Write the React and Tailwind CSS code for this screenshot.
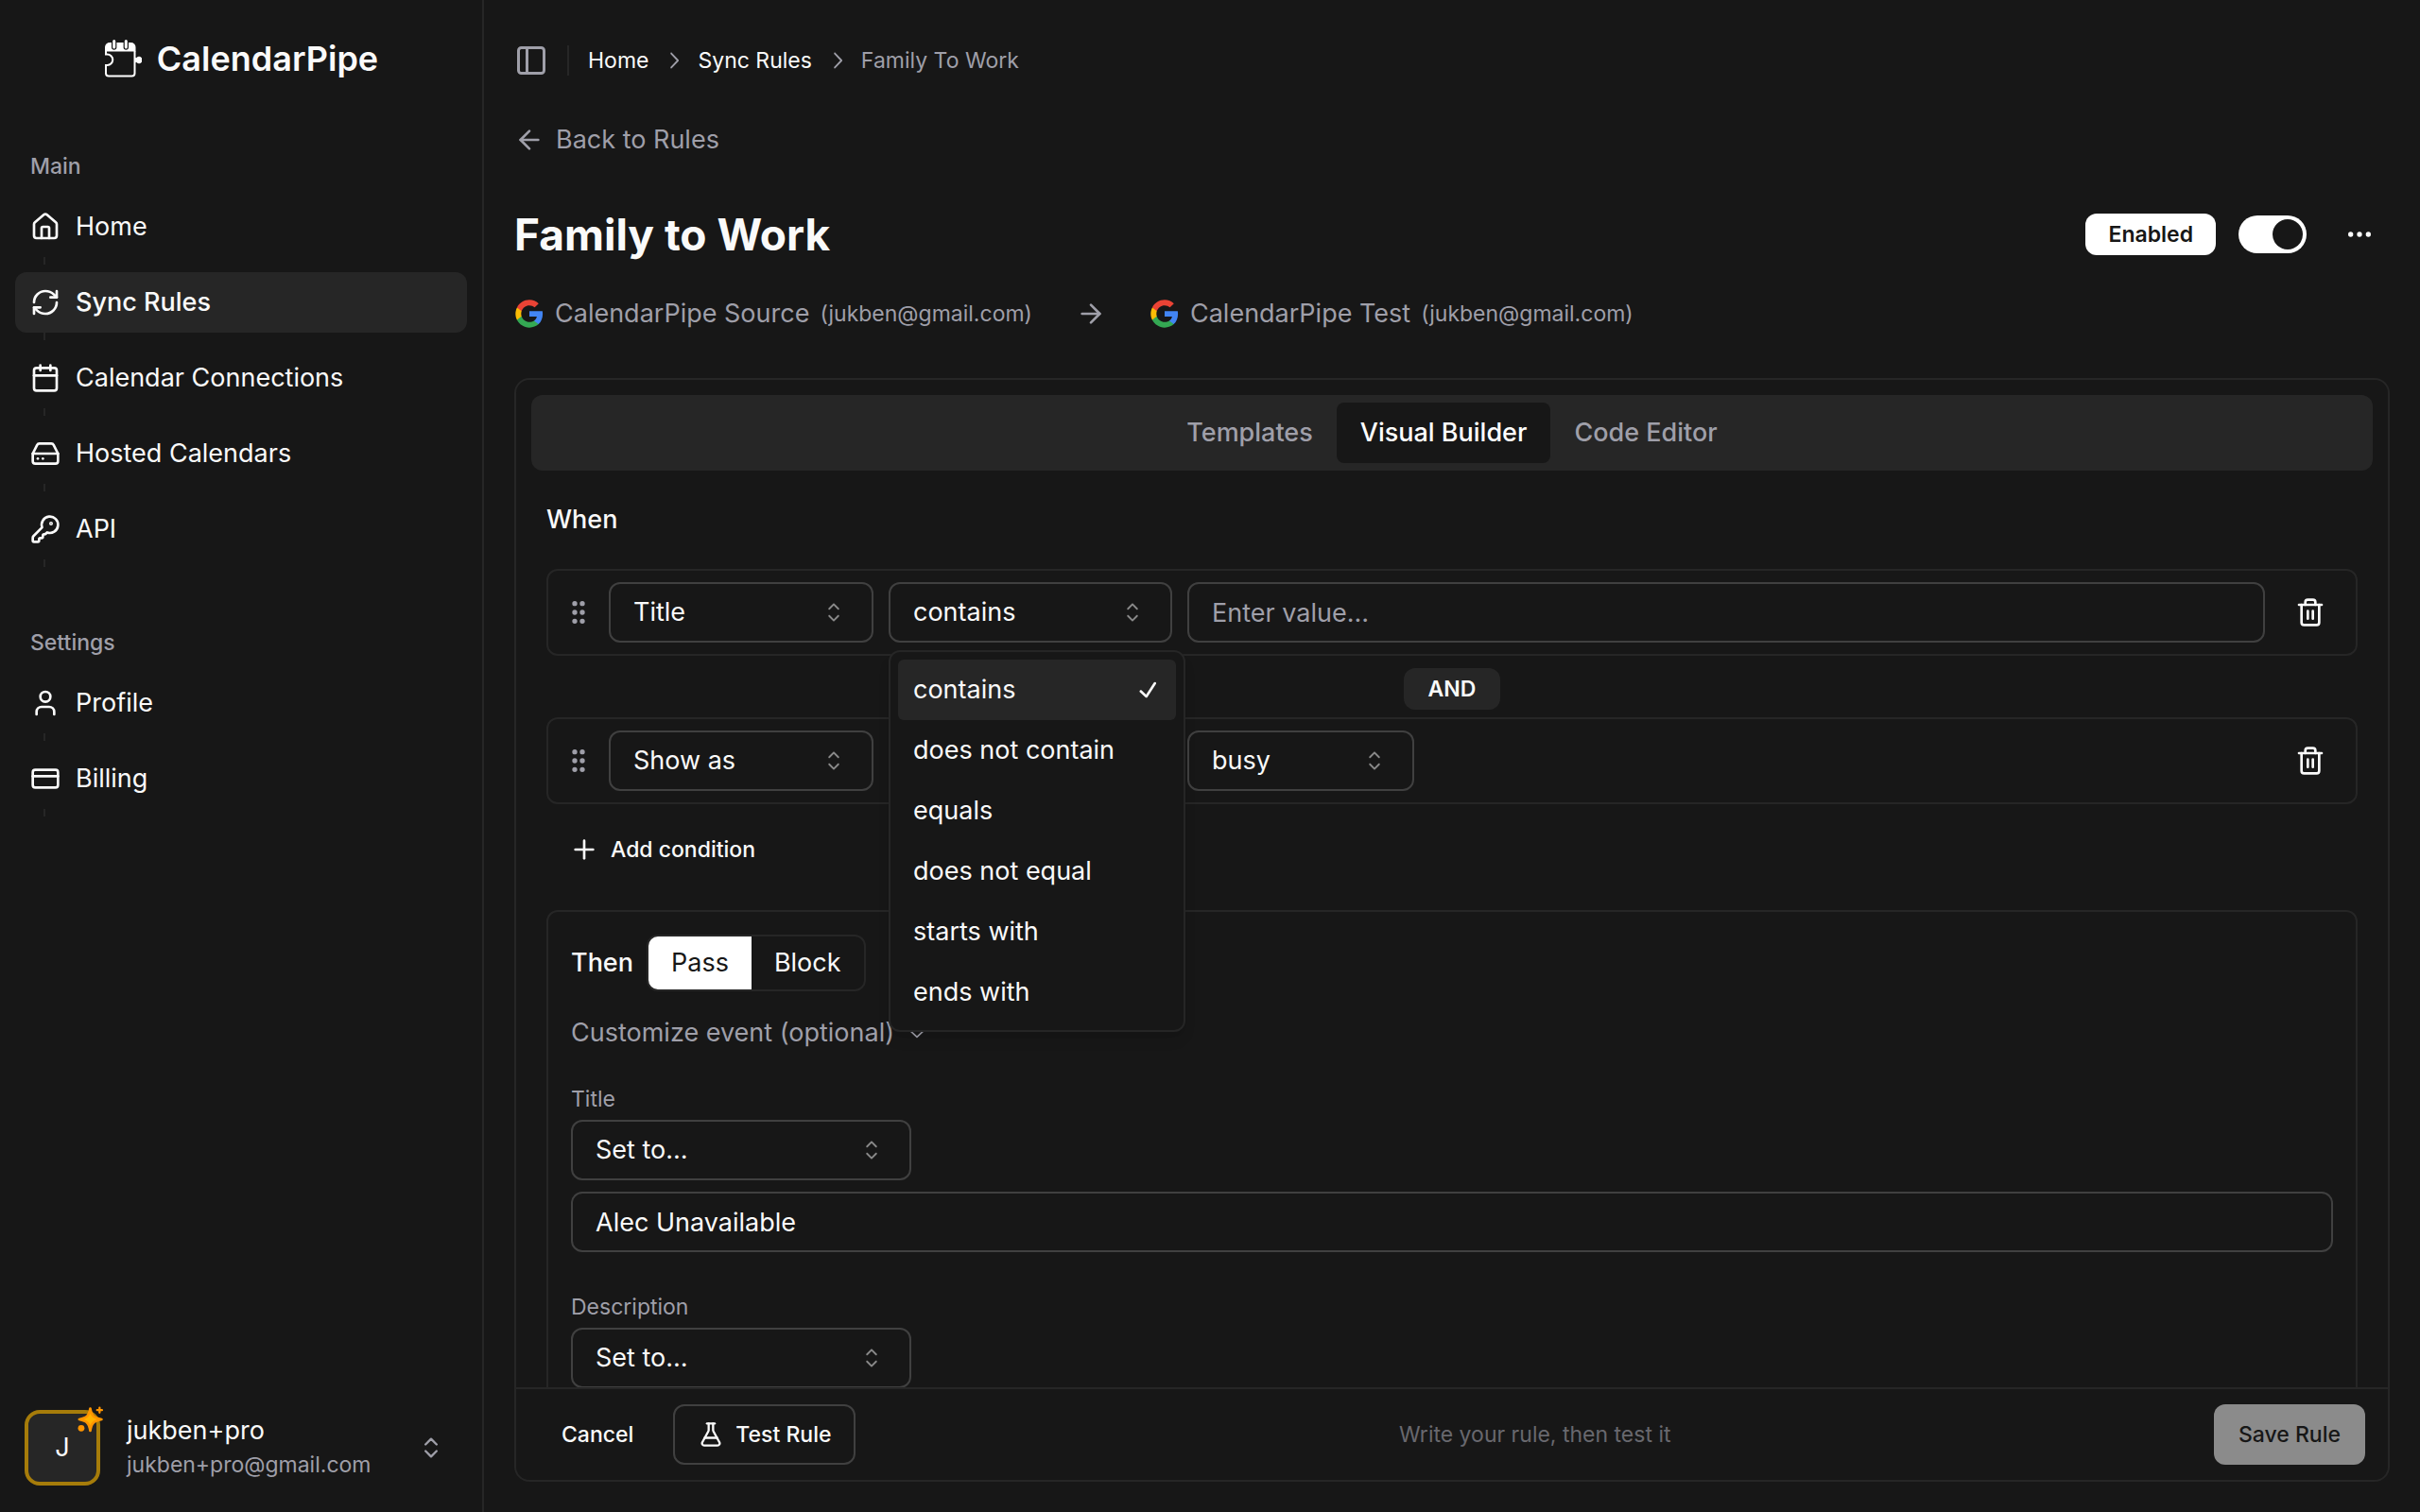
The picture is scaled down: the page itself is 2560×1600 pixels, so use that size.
import React from "react";
import {
  House,
  RefreshCw,
  Calendar,
  HardDrive,
  KeyRound,
  User,
  CreditCard,
  PanelLeft,
  ArrowLeft,
  ArrowRight,
  Ellipsis,
  GripVertical,
  Trash2,
  Plus,
  FlaskConical,
  ChevronsUpDown,
} from "lucide-react";
import { RxCaretSort, RxCheck, RxChevronRight, RxChevronDown } from "react-icons/rx";

function LogoMark() {
  return (
    <svg viewBox="0 0 40 40" className="h-10 w-10 shrink-0" aria-hidden="true">
      <path d="M1 12.5V8A5 5 0 0 1 6 3H28.5A5 5 0 0 1 33.5 8V12.5Z" fill="#fff" />
      <path
        d="M2 12V15.5H3.5A5.700 5.700 0 0 1 3.5 27H2V35.500A3 3 0 0 0 5 38.500H29.500A3 3 0 0 0 32.500 35.500V12"
        fill="none"
        stroke="#fff"
        strokeWidth="2"
      />
      <path d="M33 19H34.500A3.600 3.600 0 1 1 34.500 24H33Z" fill="#fff" />
      <path d="M10.700 2.500V8M23.300 2.500V8" stroke="#171717" strokeWidth="5.400" strokeLinecap="round" />
      <path d="M10.700 1.500V8M23.300 1.500V8" stroke="#fff" strokeWidth="3" strokeLinecap="round" />
    </svg>
  );
}

function GoogleMark() {
  return (
    <svg viewBox="0 0 24 24" className="size-8 shrink-0" aria-hidden="true">
      <path
        fill="#4285F4"
        d="M22.56 12.25c0-.78-.07-1.53-.2-2.25H12v4.26h5.92c-.26 1.37-1.04 2.53-2.21 3.310v2.770h3.570c2.080-1.920 3.280-4.740 3.280-8.090z"
      />
      <path
        fill="#34A853"
        d="M12 23c2.970 0 5.460-.98 7.280-2.660l-3.570-2.770c-.98.66-2.230 1.060-3.710 1.060-2.860 0-5.290-1.930-6.160-4.530H2.180v2.840C3.990 20.530 7.700 23 12 23z"
      />
      <path
        fill="#FBBC05"
        d="M5.840 14.090c-.22-.66-.35-1.360-.35-2.090s.13-1.430.35-2.090V7.070H2.180C1.430 8.550 1 10.220 1 12s.43 3.450 1.180 4.930l2.850-2.220.81-.62z"
      />
      <path
        fill="#EA4335"
        d="M12 5.380c1.620 0 3.060.56 4.210 1.640l3.150-3.150C17.450 2.090 14.970 1 12 1 7.700 1 3.990 3.470 2.180 7.070l3.660 2.840c.87-2.600 3.300-4.530 6.160-4.530z"
      />
    </svg>
  );
}

function Sparkles() {
  const star = "M13 2.500C14.200 9.500 16 11.800 24.500 13.500C16 15.200 14.200 17.500 13 25C11.800 17.500 10 15.200 1.800 13.500C10 11.800 11.800 9.500 13 2.500Z";
  return (
    <svg viewBox="0 0 27 27" className="absolute -top-2 -right-2 size-7" aria-hidden="true">
      <path d={star} fill="#ffb300" stroke="#ff9500" strokeWidth="2.600" strokeLinejoin="round" />
      <path d="M22.500 1.500V6.500M20 4H25" stroke="#ff9500" strokeWidth="2.200" strokeLinecap="round" />
      <circle cx="3.800" cy="22.500" r="3.300" fill="#ff9500" />
    </svg>
  );
}

function NavGroup({ label, items }) {
  return (
    <section className="px-4">
      <h2 className="flex h-16 items-center px-4 text-[23px] font-medium text-[#9f9fa9]">{label}</h2>
      <ul>
        {items.map(({ name, Icon, active }) => (
          <li key={name}>
            <a
              href="#"
              aria-current={active ? "page" : undefined}
              className={
                active
                  ? "flex h-16 items-center gap-4 rounded-xl bg-[#262626] px-4 font-medium"
                  : "flex h-16 items-center gap-4 rounded-xl px-4"
              }
            >
              <Icon className="size-8 shrink-0" />
              {name}
            </a>
            <div className="mb-2 ml-[30px] h-2 w-0.5 bg-[#262626]" />
          </li>
        ))}
      </ul>
    </section>
  );
}

function Select({ id, label, value, className }) {
  return (
    <div className={"relative shrink-0 " + className}>
      <select
        id={id}
        aria-label={label}
        defaultValue={value}
        className="h-16 w-full appearance-none rounded-xl border-2 border-[#404040] bg-transparent px-6"
      >
        <option>{value}</option>
      </select>
      <RxCaretSort className="pointer-events-none absolute top-4 right-[26px] size-8 opacity-50" />
    </div>
  );
}

const operators = ["contains", "does not contain", "equals", "does not equal", "starts with", "ends with"];

function OperatorMenu() {
  return (
    <div className="relative w-[300px] shrink-0">
      <button
        type="button"
        role="combobox"
        aria-label="Operator"
        aria-expanded="true"
        aria-controls="operators"
        className="flex h-16 w-full items-center justify-between rounded-xl border-2 border-[#404040] px-6"
      >
        contains
        <RxCaretSort className="size-8 opacity-50" />
      </button>
      <ul
        id="operators"
        role="listbox"
        className="absolute top-[72px] left-0 z-10 w-[314px] rounded-xl border-2 border-[#262626] bg-[#171717] p-2 shadow-lg"
      >
        {operators.map((name, i) => (
          <li
            key={name}
            role="option"
            aria-selected={i === 0}
            className={
              i === 0
                ? "flex h-16 items-center justify-between rounded-md bg-[#262626] pr-[14px] pl-4"
                : "flex h-16 items-center pl-4"
            }
          >
            {name}
            {i === 0 && <RxCheck className="size-8" />}
          </li>
        ))}
      </ul>
    </div>
  );
}

function Condition({ children }) {
  return (
    <div className="flex items-center gap-4 rounded-xl border-2 border-[#262626] px-4 py-3">
      <GripVertical className="size-8 shrink-0 text-[#9f9fa9]" />
      {children}
      <button type="button" aria-label="Delete condition" className="ml-auto flex size-16 shrink-0 items-center justify-center">
        <Trash2 className="size-8" />
      </button>
    </div>
  );
}

function Endpoint({ name, email }) {
  return (
    <div className="flex items-center gap-[11px]">
      <GoogleMark />
      <span>{name}</span>
      <span className="text-[23px]">({email})</span>
    </div>
  );
}

function Sidebar() {
  return (
    <aside className="flex w-[512px] shrink-0 flex-col border-r-2 border-[#262626]">
      <a href="#" className="flex h-[124px] items-center justify-center gap-4 text-[36px] font-semibold">
        <LogoMark />
        CalendarPipe
      </a>
      <nav className="flex flex-1 flex-col gap-10 pt-5">
        <NavGroup
          label="Main"
          items={[
            { name: "Home", Icon: House },
            { name: "Sync Rules", Icon: RefreshCw, active: true },
            { name: "Calendar Connections", Icon: Calendar },
            { name: "Hosted Calendars", Icon: HardDrive },
            { name: "API", Icon: KeyRound },
          ]}
        />
        <NavGroup
          label="Settings"
          items={[
            { name: "Profile", Icon: User },
            { name: "Billing", Icon: CreditCard },
          ]}
        />
      </nav>
      <button type="button" className="mb-7 flex items-center px-[26px] text-left">
        <span className="relative flex size-20 shrink-0 items-center justify-center rounded-2xl border-4 border-[#a67c0a] bg-[#262626]">
          J
          <Sparkles />
        </span>
        <span className="ml-7 flex flex-1 flex-col">
          <span className="leading-9">jukben+pro</span>
          <span className="text-[23px] leading-9 text-[#9f9fa9]">jukben+pro@gmail.com</span>
        </span>
        <ChevronsUpDown className="mr-[14px] size-7 text-[#9f9fa9]" />
      </button>
    </aside>
  );
}

function RuleHeader() {
  return (
    <header>
      <div className="flex h-32 items-center">
        <button type="button" aria-label="Toggle sidebar" className="text-[#9f9fa9]">
          <PanelLeft className="size-9" />
        </button>
        <div className="mr-5 ml-5 h-8 w-0.5 bg-[#262626]" />
        <nav aria-label="Breadcrumb" className="flex items-center gap-3 text-[23px]">
          <a href="#">Home</a>
          <RxChevronRight className="size-7 text-[#9f9fa9]" />
          <a href="#">Sync Rules</a>
          <RxChevronRight className="size-7 text-[#9f9fa9]" />
          <span className="text-[#9f9fa9]">Family To Work</span>
        </nav>
      </div>
      <a href="#" className="flex h-10 w-fit items-center gap-3 text-[#9f9fa9]">
        <ArrowLeft className="size-8" />
        Back to Rules
      </a>
      <div className="mt-12 flex h-16 items-center">
        <h1 className="flex-1 text-[46px] font-bold">Family to Work</h1>
        <span className="flex h-11 items-center rounded-xl bg-white px-6 text-[23px] font-semibold text-[#171717]">
          Enabled
        </span>
        <input
          type="checkbox"
          role="switch"
          aria-label="Rule enabled"
          defaultChecked
          className="ml-6 h-10 w-[72px] appearance-none rounded-full bg-white p-1 before:ml-auto before:block before:size-8 before:rounded-full before:bg-[#171717]"
        />
        <button type="button" aria-label="More actions" className="ml-6 flex size-16 items-center justify-center">
          <Ellipsis className="size-8" />
        </button>
      </div>
      <div className="mt-8 flex h-10 items-center gap-[46px] text-[#9f9fa9]">
        <Endpoint name="CalendarPipe Source" email="jukben@gmail.com" />
        <ArrowRight className="size-8" />
        <Endpoint name="CalendarPipe Test" email="jukben@gmail.com" />
      </div>
    </header>
  );
}

function RuleForm() {
  return (
    <form className="mt-12 flex min-h-0 flex-1 flex-col rounded-2xl border-2 border-[#262626]">
      <div className="flex min-h-0 flex-1 flex-col overflow-hidden px-4 pt-4">
        <div role="tablist" className="flex h-20 shrink-0 items-center justify-center rounded-xl bg-[#262626] font-medium text-[#9f9fa9]">
          <button type="button" role="tab" aria-selected="false" className="h-16 px-[25px]">
            Templates
          </button>
          <button type="button" role="tab" aria-selected="true" className="h-16 rounded-lg bg-[#171717] px-[25px] text-white">
            Visual Builder
          </button>
          <button type="button" role="tab" aria-selected="false" className="h-16 px-[25px]">
            Code Editor
          </button>
        </div>

        <div className="min-h-0 flex-1 px-4 pt-8">
          <h2 className="mb-8 h-10 font-medium">When</h2>
          <Condition>
            <Select label="Field" value="Title" className="w-[280px]" />
            <OperatorMenu />
            <input
              aria-label="Value"
              placeholder="Enter value…"
              className="h-16 min-w-0 flex-1 rounded-xl border-2 border-[#404040] bg-transparent px-6 placeholder:text-[#9f9fa9]"
            />
          </Condition>
          <div className="flex justify-center pt-[13px] pb-2">
            <span className="flex h-11 items-center rounded-xl bg-[#262626] px-[26px] text-[23px] font-semibold">AND</span>
          </div>
          <Condition>
            <Select label="Field" value="Show as" className="w-[280px]" />
            <Select label="Operator" value="equals" className="w-[300px]" />
            <Select label="Value" value="busy" className="w-[240px]" />
          </Condition>
          <button type="button" className="mt-4 flex h-16 items-center gap-3 px-6 text-[23px] font-medium">
            <Plus className="size-8" />
            Add condition
          </button>

          <section className="mt-8 rounded-xl border-2 border-[#262626] p-6">
            <div className="flex items-center gap-[14px]">
              <h2 className="font-medium">Then</h2>
              <div role="group" aria-label="Action" className="flex h-[60px] overflow-hidden rounded-xl border-2 border-[#262626]">
                <button type="button" aria-pressed="true" className="bg-white px-6 text-[#171717]">
                  Pass
                </button>
                <button type="button" aria-pressed="false" className="px-6">
                  Block
                </button>
              </div>
            </div>
            <button type="button" aria-expanded="true" className="mt-6 flex h-10 items-center gap-3 text-[#9f9fa9]">
              Customize event (optional)
              <RxChevronDown className="size-6" />
            </button>
            <label htmlFor="title-mode" className="mt-8 mb-1 block h-9 text-[23px] leading-9 text-[#9f9fa9]">
              Title
            </label>
            <Select id="title-mode" value="Set to…" className="w-[360px]" />
            <input
              aria-label="Event title"
              defaultValue="Alec Unavailable"
              className="mt-3 h-16 w-full rounded-xl border-2 border-[#404040] bg-transparent px-6"
            />
            <label htmlFor="description-mode" className="mt-10 mb-1 block h-9 text-[23px] leading-9 text-[#9f9fa9]">
              Description
            </label>
            <Select id="description-mode" value="Set to…" className="w-[360px]" />
          </section>
        </div>
      </div>

      <footer className="flex items-center border-t-2 border-[#262626] px-6 py-4 text-[23px] font-medium">
        <button type="button" className="h-16 px-6">
          Cancel
        </button>
        <button type="button" className="ml-[18px] flex h-16 items-center gap-3 rounded-xl border-2 border-[#404040] px-6">
          <FlaskConical className="size-7" />
          Test Rule
        </button>
        <p className="flex-1 text-center font-normal text-[#68686e]">Write your rule, then test it</p>
        <button type="button" disabled className="h-16 rounded-xl bg-[#8b8b8b] px-[26px] text-[#171717]">
          Save Rule
        </button>
      </footer>
    </form>
  );
}

export default function App() {
  return (
    <div className="flex h-screen overflow-hidden bg-[#171717] font-['Inter',sans-serif] text-[27px] leading-10 text-[#fafafa]">
      <Sidebar />
      <main className="flex min-w-0 flex-1 flex-col px-8 pb-8">
        <RuleHeader />
        <RuleForm />
      </main>
    </div>
  );
}
